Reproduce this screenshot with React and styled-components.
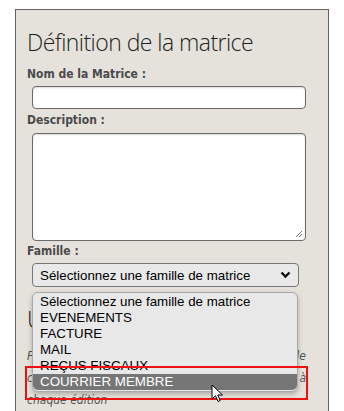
import React from "react";
import styled, { createGlobalStyle } from "styled-components";

const Global = createGlobalStyle`
  html, body { margin: 0; padding: 0; background: #ffffff; }
  body { font-family: "Liberation Sans", Arial, sans-serif; }
`;

const Page = styled.div`
  padding: 9px 0 0 15px;
  width: 344px;
  height: 411px;
  box-sizing: border-box;
  overflow: hidden;
  position: relative;
`;

const Panel = styled.section`
  width: 314px;
  height: 420px;
  box-sizing: border-box;
  border: 1px solid #626262;
  background: #e5e2db;
  padding: 17px 0 0 11px;
  display: flex;
  flex-direction: column;
`;

const Title = styled.h1`
  margin: 0;
  font-family: "Open Sans", sans-serif;
  font-weight: 300;
  font-size: 23px;
  line-height: 30px;
  color: #1e1e1e;
  letter-spacing: -0.55px;
`;

const Label = styled.label`
  display: block;
  font-family: "DejaVu Sans", sans-serif;
  font-stretch: condensed;
  font-weight: bold;
  font-size: 12px;
  line-height: 16px;
  color: #4a4a4a;
  margin-top: ${(p) => p.$mt || 0}px;
`;

const Field = styled.div`
  padding-left: 5px;
  margin-top: ${(p) => p.$mt || 4}px;
  position: relative;
`;

const TextInput = styled.div`
  width: 274px;
  height: 23px;
  box-sizing: border-box;
  border: 1px solid #6b6b6b;
  border-radius: 4px;
  background: #fff;
  box-shadow: inset 0 1px 2px rgba(0,0,0,0.15);
`;

const TextArea = styled.div`
  width: 274px;
  height: 108px;
  box-sizing: border-box;
  border: 1px solid #6b6b6b;
  border-radius: 4px;
  background: #fff;
  box-shadow: inset 0 1px 2px rgba(0,0,0,0.15);
  position: relative;
`;

const Grip = styled.svg`
  position: absolute;
  right: 2px;
  bottom: 2px;
`;

const SelectWrap = styled.div`
  padding-left: 5px;
`;

const SelectBox = styled.div`
  width: 267px;
  height: 24px;
  box-sizing: border-box;
  border: 1px solid #767676;
  border-radius: 4px;
  background: #e9e9e9;
  display: flex;
  align-items: center;
  justify-content: space-between;
  padding: 0 7px 0 7px;
  font-size: 13.33px;
  color: #000;
`;

const Dropdown = styled.ul`
  position: absolute;
  left: 5px;
  top: 29px;
  width: 266px;
  margin: 0;
  padding: 1px 0 1px 0;
  list-style: none;
  box-sizing: border-box;
  background: #e8e8e8;
  border: 1px solid #a9a9a9;
  border-radius: 6px;
  box-shadow: 0 2px 5px rgba(0,0,0,0.25);
  z-index: 2;
`;

const Option = styled.li`
  height: 16px;
  line-height: 16px;
  padding-left: 7px;
  font-size: 13.33px;
  color: ${(p) => (p.$active ? "#ffffff" : "#000000")};
  background: ${(p) => (p.$active ? "#767676" : "transparent")};
  border-radius: ${(p) => (p.$active ? "0 0 5px 5px" : "0")};
  white-space: nowrap;
`;

const RedFrame = styled.div`
  position: absolute;
  left: -8px;
  top: 73px;
  width: 283px;
  height: 34px;
  box-sizing: border-box;
  border: 2px solid #ee1111;
  z-index: 3;
`;

const SubTitle = styled.h2`
  margin: 17px 0 0 0;
  font-family: "Open Sans", sans-serif;
  font-weight: 300;
  font-size: 23px;
  line-height: 30px;
  color: #1e1e1e;
`;

const Para = styled.p`
  margin: 11px 0 0 0;
  width: 279px;
  font-family: "DejaVu Sans", sans-serif;
  font-stretch: condensed;
  font-style: italic;
  font-size: 12px;
  line-height: 22px;
  color: #555;
`;

const Line = styled.span`
  display: block;
  text-align: ${(p) => (p.$justify ? "justify" : "left")};
  text-align-last: ${(p) => (p.$justify ? "justify" : "left")};
`;

const Cursor = styled.svg`
  position: absolute;
  left: 211px;
  top: 384px;
  z-index: 4;
`;

const options = [
  "Sélectionnez une famille de matrice",
  "EVENEMENTS",
  "FACTURE",
  "MAIL",
  "REÇUS FISCAUX",
  "COURRIER MEMBRE",
];

export default function App() {
  return (
    <>
      <Global />
      <Page>
        <Panel>
          <Title>Définition de la matrice</Title>
          <Label $mt={9}>Nom de la Matrice :</Label>
          <Field>
            <TextInput />
          </Field>
          <Label $mt={3}>Description :</Label>
          <Field $mt={5}>
            <TextArea>
              <Grip width="9" height="9" viewBox="0 0 9 9">
                <path d="M8 2 L2 8 M8 5 L5 8" stroke="#777" strokeWidth="1" />
              </Grip>
            </TextArea>
          </Field>
          <Label $mt={2}>Famille :</Label>
          <Field $mt={4} style={{ paddingLeft: 0 }}>
            <SelectWrap>
              <SelectBox>
                <span>Sélectionnez une famille de matrice</span>
                <svg width="11" height="8" viewBox="0 0 11 8">
                  <path d="M1.5 1.5 L5.5 5.5 L9.5 1.5" fill="none" stroke="#111" strokeWidth="2.4" />
                </svg>
              </SelectBox>
            </SelectWrap>
            <Dropdown>
              {options.map((o, i) => (
                <Option key={o} $active={i === options.length - 1}>{o}</Option>
              ))}
              <RedFrame />
            </Dropdown>
          </Field>
          <SubTitle>Utilisation</SubTitle>
          <Para>
            <Line $justify>Fusionnez les champs du contact dans le modèle</Line>
            <Line $justify>choisi, ils seront remplis automatiquement à</Line>
            <Line>chaque édition</Line>
          </Para>
        </Panel>
        <Cursor width="13" height="20" viewBox="0 0 13 20">
          <path d="M1 1 L1 15 L4.5 11.8 L7 17.5 L9.2 16.5 L6.8 11 L11.5 11 Z" fill="#fff" stroke="#000" strokeWidth="1" strokeLinejoin="round" />
        </Cursor>
      </Page>
    </>
  );
}
